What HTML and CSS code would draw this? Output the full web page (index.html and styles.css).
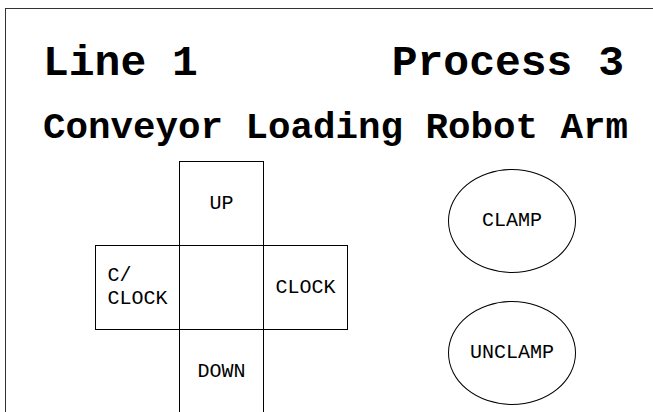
FILE: index.html
```html
<html>
	<head>
		<title>Robot Arm Control</title>
		<link rel="stylesheet" href="styles.css">
	</head>
	<body>
		<div class="panel">
			<div class="heading">
				<span>Line 1</span>
				<span>Process 3</span>
			</div>
			<div class="station">Conveyor Loading Robot Arm</div>
			<div class="controls">
				<table class="pad">
					<tr>
						<td class="blank"></td>
						<td class="key">UP</td>
						<td class="blank"></td>
					</tr>
					<tr>
						<td class="key"><span class="wrap">C/<br>CLOCK</span></td>
						<td class="key"></td>
						<td class="key">CLOCK</td>
					</tr>
					<tr>
						<td class="blank"></td>
						<td class="key">DOWN</td>
						<td class="blank"></td>
					</tr>
				</table>
				<div class="grip">
					<div class="round">CLAMP</div>
					<div class="round">UNCLAMP</div>
				</div>
			</div>
		</div>
	</body>
</html>
```
FILE: styles.css
```css
html, body {
  overflow: hidden;
}

body {
  margin: 0;
  font-family: "Courier New", "Nimbus Mono PS", "Nimbus Mono L", FreeMono, "Liberation Mono", monospace;
  color: #000;
  background-color: #fff;
}

div.panel {
  box-sizing: border-box;
  width: 680px;
  height: 440px;
  margin: 8px 0 0 5px;
  padding: 33px 0 0 37px;
  border: 1px solid #333;
}

div.heading {
  display: flex;
  justify-content: space-between;
  width: 581px;
  font-size: 43px;
  font-weight: bold;
  line-height: 1;
}

div.station {
  margin-top: 25px;
  font-size: 37.5px;
  font-weight: bold;
  line-height: 1;
  white-space: nowrap;
}

div.controls {
  display: flex;
  margin-top: 13px;
  padding-left: 52px;
}

table.pad {
  border-collapse: collapse;
  table-layout: fixed;
}

table.pad td {
  width: 83px;
  height: 84px;
  padding: 0;
  text-align: center;
  vertical-align: middle;
  font-size: 20px;
  line-height: 23px;
}

td.key {
  border: 1px solid #000;
}

td.blank {
  border: none;
}

span.wrap {
  display: inline-block;
  text-align: left;
}

div.grip {
  display: flex;
  flex-direction: column;
  gap: 28px;
  margin: 8px 0 0 100px;
}

div.round {
  box-sizing: border-box;
  width: 128px;
  height: 104px;
  border: 1px solid #000;
  border-radius: 50%;
  display: flex;
  align-items: center;
  justify-content: center;
  font-size: 20px;
}
```
